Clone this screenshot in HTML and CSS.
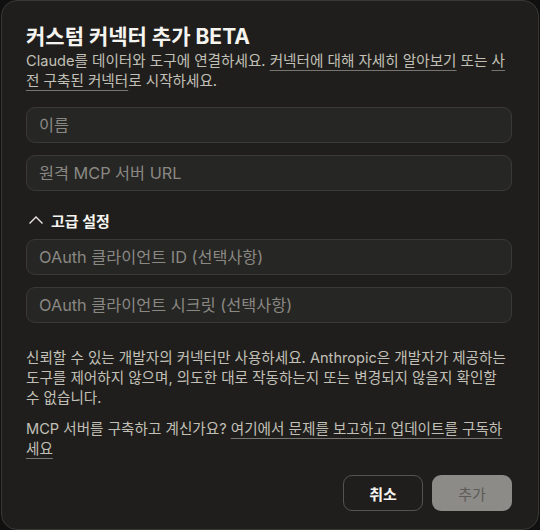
FILE: index.html
```html
<!DOCTYPE html>
<html>

<head>
    <title>커스텀 커넥터 추가</title>
    <link rel="stylesheet" href="styles.css">
</head>

<body>
    <div class="dialog">
        <h1 class="title">커스텀 커넥터 추가 BETA</h1>
        <p class="desc">Claude를 데이터와 도구에 연결하세요. <a href="#">커넥터에 대해 자세히 알아보기</a> 또는 <a href="#">사전 구축된 커넥터</a>로 시작하세요.</p>

        <form class="fields">
            <input type="text" class="field" placeholder="이름">
            <input type="text" class="field" placeholder="원격 MCP 서버 URL">

            <button type="button" class="advanced">
                <svg width="16" height="10" viewBox="0 0 16 10">
                    <polyline points="1.5,8.5 8,2 14.5,8.5" fill="none" stroke="#e8e6df" stroke-width="1.4" />
                </svg>
                고급 설정
            </button>

            <input type="text" class="field field-tight" placeholder="OAuth 클라이언트 ID (선택사항)">
            <input type="text" class="field" placeholder="OAuth 클라이언트 시크릿 (선택사항)">
        </form>

        <p class="note">신뢰할 수 있는 개발자의 커넥터만 사용하세요. Anthropic은 개발자가 제공하는 도구를 제어하지 않으며, 의도한 대로 작동하는지 또는 변경되지 않을지 확인할 수 없습니다.</p>
        <p class="note note-second">MCP 서버를 구축하고 계신가요? <a href="#">여기에서 문제를 보고하고 업데이트를 구독하세요</a></p>

        <div class="actions">
            <button type="button" class="btn btn-cancel">취소</button>
            <button type="button" class="btn btn-add" disabled>추가</button>
        </div>
    </div>
</body>

</html>
```

FILE: styles.css
```css
body {
    margin: 0;
    background-color: #101010;
    font-family: Inter, "Noto Sans CJK KR", sans-serif;
}

.dialog {
    box-sizing: border-box;
    width: 538px;
    height: 530px;
    margin: 0 1px;
    padding: 23px 26px 0 24px;
    background-color: #1f1e1d;
    border: 1px solid #393835;
    border-radius: 16px;
}

.title {
    margin: 0;
    font-size: 21px;
    line-height: 26px;
    font-weight: 700;
    color: #f5f4ef;
}

.desc {
    margin: 1px 0 0;
    font-size: 14.6px;
    line-height: 20px;
    color: #c2c0b6;
}

a {
    color: inherit;
    text-decoration: underline;
    text-decoration-color: #77756f;
    text-underline-offset: 4px;
}

.fields {
    display: flex;
    flex-direction: column;
    margin-top: 16px;
}

.field {
    box-sizing: border-box;
    width: 100%;
    height: 36px;
    margin-bottom: 12px;
    padding: 0 12px;
    font-family: inherit;
    font-size: 16.3px;
    color: #e8e6df;
    background-color: #262624;
    border: 1px solid #3a3936;
    border-radius: 9px;
}

.field::placeholder {
    color: #8a8883;
}

.field-tight {
    margin-top: 9px;
}

.advanced {
    display: flex;
    align-items: center;
    gap: 7px;
    margin-top: 7px;
    padding: 0 0 0 2px;
    height: 20px;
    font-family: inherit;
    font-size: 15px;
    font-weight: 700;
    color: #f5f4ef;
    background: none;
    border: none;
}

.note {
    margin: 13px 0 0;
    font-size: 14.6px;
    line-height: 20px;
    color: #c2c0b6;
}

.note-second {
    margin-top: 11px;
}

.actions {
    display: flex;
    justify-content: flex-end;
    gap: 9px;
    margin-top: 16px;
}

.btn {
    width: 80px;
    height: 36px;
    font-family: inherit;
    font-size: 15px;
    border-radius: 9px;
}

.btn-cancel {
    font-weight: 700;
    color: #f5f4ef;
    background-color: #1f1e1d;
    border: 1px solid #55534e;
}

.btn-add {
    color: #5c5b57;
    background-color: #8c8b87;
    border: none;
}
```
